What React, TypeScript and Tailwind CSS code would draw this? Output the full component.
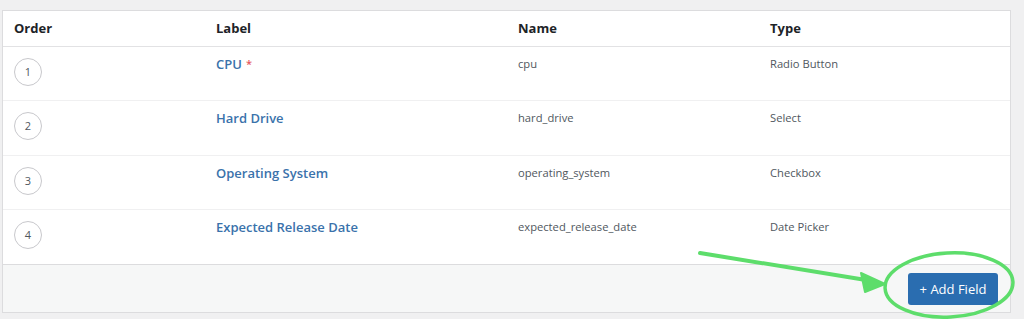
import React from "react";

const rows = [
  { n: 1, label: "CPU", req: true, name: "cpu", type: "Radio Button", h: "h-[54px]" },
  { n: 2, label: "Hard Drive", req: false, name: "hard_drive", type: "Select", h: "h-[55px]" },
  { n: 3, label: "Operating System", req: false, name: "operating_system", type: "Checkbox", h: "h-[54px]" },
  { n: 4, label: "Expected Release Date", req: false, name: "expected_release_date", type: "Date Picker", h: "h-[54px]" },
];

export default function App() {
  return (
    <div
      className="relative w-[1024px] h-[319px] bg-[#f0f0f1] pt-[10px] pl-[2px] overflow-hidden"
      style={{ fontFamily: '"Open Sans", "Noto Sans", sans-serif' }}
    >
      <div className="w-[1009px] h-[303px] border border-[#dcdcde] bg-white flex flex-col">
        <div className="grid grid-cols-[201px_302px_252px_1fr] h-[36px] items-center border-b border-[#e2e2e4] text-[13px] font-bold text-[#1d2327]">
          <div className="pl-[11px]">Order</div>
          <div className="pl-[12px]">Label</div>
          <div className="pl-[12px]">Name</div>
          <div className="pl-[12px]">Type</div>
        </div>
        {rows.map((r, i) => (
          <div
            key={r.n}
            className={`grid grid-cols-[201px_302px_252px_1fr] ${r.h} ${i < 3 ? "border-b border-[#f0f0f1]" : ""}`}
          >
            <div className="pl-[11px] pt-[11px]">
              <div className="w-[28px] h-[28px] rounded-full border border-[#c8c8cc] flex items-center justify-center text-[11px] text-[#50575e]">
                {r.n}
              </div>
            </div>
            <div className="pl-[12px] pt-[7px] text-[13px] font-semibold text-[#3a72ab] leading-[20px]">
              {r.label}
              {r.req && <span className="text-[#e65a5e] text-[11px] align-top ml-[4px]">*</span>}
            </div>
            <div className="pl-[12px] pt-[8px] text-[11.2px] text-[#50575e] leading-[18px]">{r.name}</div>
            <div className="pl-[12px] pt-[8px] text-[11.2px] text-[#50575e] leading-[18px]">{r.type}</div>
          </div>
        ))}
        <div className="flex-1 bg-[#f6f7f7] border-t border-[#dcdcde] flex justify-end items-start pt-[8px] pr-[12px]">
          <button className="w-[90px] h-[32px] rounded-[3px] bg-[#2a6db0] text-white text-[13px] leading-none">
            + Add Field
          </button>
        </div>
      </div>
      <svg className="absolute left-0 top-0 pointer-events-none" width="1024" height="319">
        <ellipse cx="949" cy="285" rx="64" ry="32" fill="none" stroke="#5ddd6b" strokeWidth="3.5" transform="rotate(-3 949 285)" />
        <line x1="700" y1="253" x2="866" y2="280" stroke="#5ddd6b" strokeWidth="4" strokeLinecap="round" />
        <polygon points="885,284 861,273 865,292" fill="#5ddd6b" stroke="#5ddd6b" strokeWidth="2" strokeLinejoin="round" />
      </svg>
    </div>
  );
}
